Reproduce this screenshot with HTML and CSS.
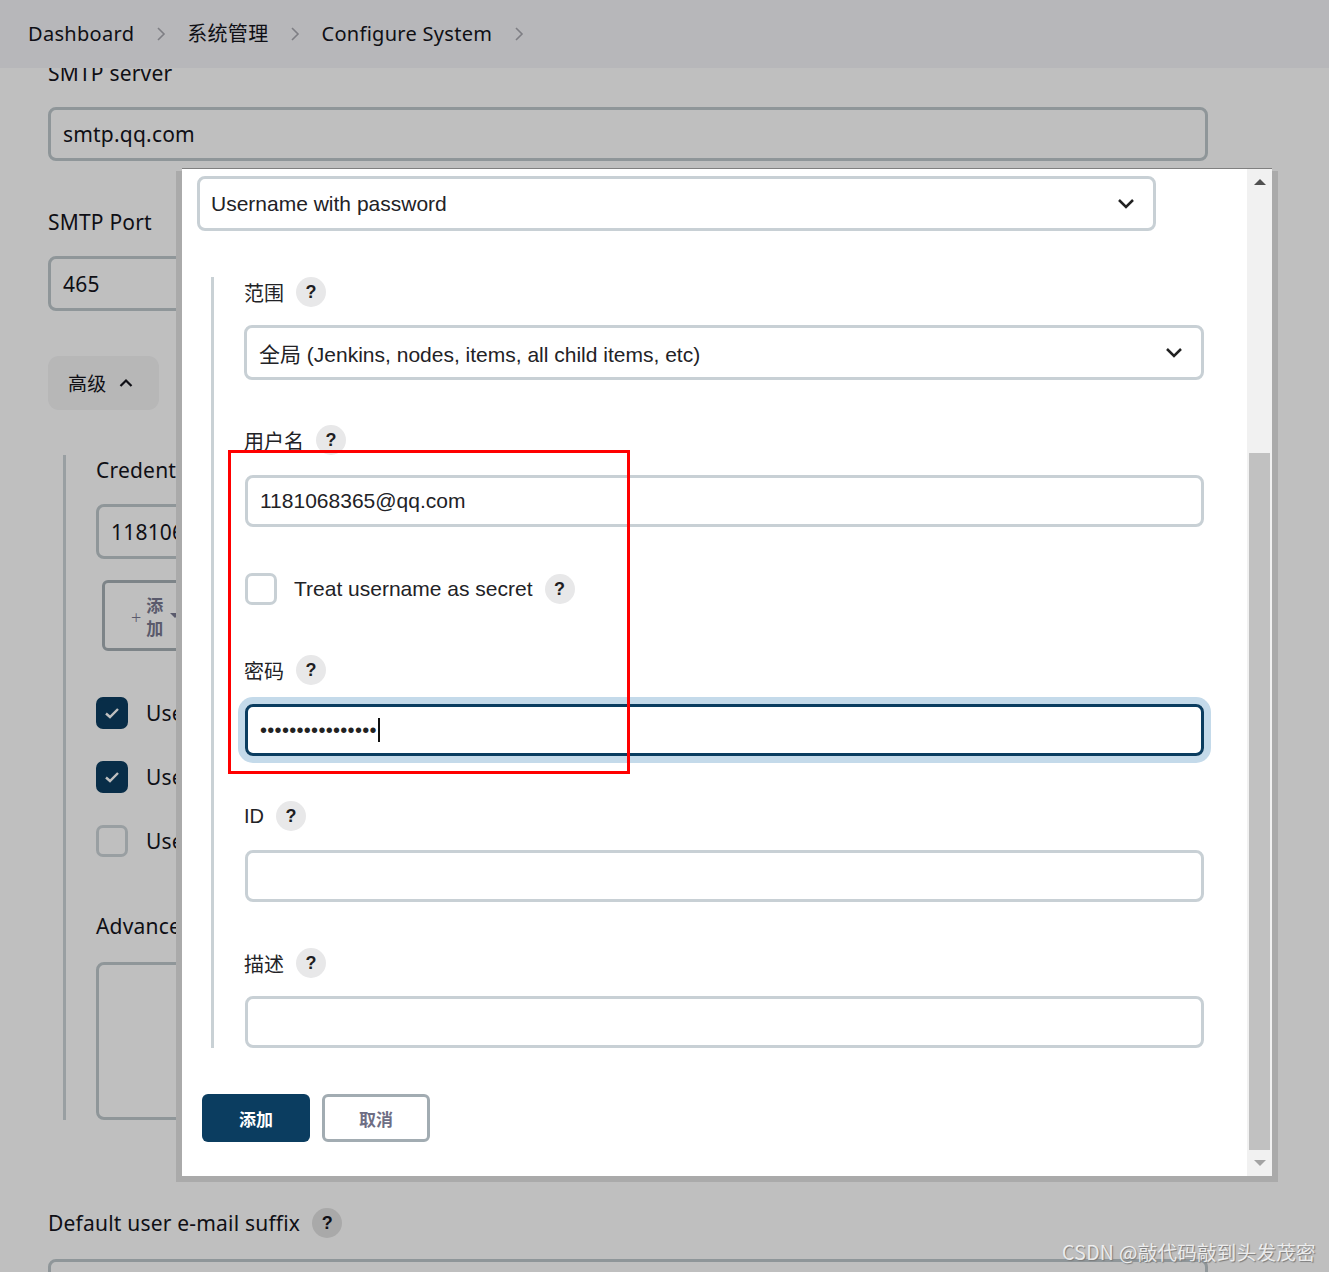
FILE: index.html
```html
<!DOCTYPE html>
<html lang="zh">
<head>
<meta charset="utf-8">
<title>Configure System</title>
<link rel="stylesheet" href="styles.css">
</head>
<body>
<header class="crumbs">
  <span class="crumb">Dashboard</span>
  <svg class="crumb-sep" width="10" height="16" viewBox="0 0 10 16"><polyline points="2,2 8,8 2,14" fill="none" stroke="currentColor" stroke-width="1.6"/></svg>
  <span class="crumb">系统管理</span>
  <svg class="crumb-sep" width="10" height="16" viewBox="0 0 10 16"><polyline points="2,2 8,8 2,14" fill="none" stroke="currentColor" stroke-width="1.6"/></svg>
  <span class="crumb">Configure System</span>
  <svg class="crumb-sep" width="10" height="16" viewBox="0 0 10 16"><polyline points="2,2 8,8 2,14" fill="none" stroke="currentColor" stroke-width="1.6"/></svg>
</header>

<main class="page">
  <div class="bg-label first">SMTP server</div>
  <div class="bg-input h54">smtp.qq.com</div>

  <div class="bg-label mt48">SMTP Port</div>
  <div class="bg-input h55 mt22">465</div>

  <div class="adv-btn">高级
    <svg width="14" height="10" viewBox="0 0 14 10"><polyline points="1.5,8 7,2.5 12.5,8" fill="none" stroke="currentColor" stroke-width="2.2"/></svg>
  </div>

  <section class="bg-section">
    <div class="bg-label sec-first">Credentials</div>
    <div class="bg-input h55 mt22">1181068365@qq.com/******</div>
    <div class="add-btn">
      <span class="plus">+</span>
      <span class="add-text">添<br>加</span>
      <span class="caret"></span>
    </div>
    <div class="bg-check mt46"><span class="cbox on"><svg width="18" height="14" viewBox="0 0 18 14"><polyline points="3,7.5 7,11 15,3" fill="none" stroke="#fff" stroke-width="2.4"/></svg></span>Use SSL</div>
    <div class="bg-check mt32"><span class="cbox on"><svg width="18" height="14" viewBox="0 0 18 14"><polyline points="3,7.5 7,11 15,3" fill="none" stroke="#fff" stroke-width="2.4"/></svg></span>Use TLS</div>
    <div class="bg-check mt32"><span class="cbox"></span>Use OAuth 2.0</div>
    <div class="bg-label mt56">Advanced Email Properties</div>
    <div class="bg-textarea"></div>
  </section>

  <div class="bg-label-row">Default user e-mail suffix <span class="bg-help">?</span></div>
  <div class="bg-input h55 mt20"></div>
</main>

<div class="overlay"></div>
<div class="modal-frame"></div>

<div class="modal">
  <div class="modal-body">
    <div class="select kind">
      <span>Username with password</span>
      <svg width="18" height="11" viewBox="0 0 18 11"><polyline points="2,2 9,9 16,2" fill="none" stroke="#222" stroke-width="2.5"/></svg>
    </div>

    <div class="m-section">
      <div class="m-label">范围 <span class="help">?</span></div>
      <div class="select scope">
        <span>全局 (Jenkins, nodes, items, all child items, etc)</span>
        <svg width="18" height="11" viewBox="0 0 18 11"><polyline points="2,2 9,9 16,2" fill="none" stroke="#222" stroke-width="2.5"/></svg>
      </div>

      <div class="m-label mt45">用户名 <span class="help">?</span></div>
      <div class="m-input mt20">1181068365@qq.com</div>

      <div class="m-check">
        <span class="m-cbox"></span>
        <span class="m-check-text">Treat username as secret</span>
        <span class="help">?</span>
      </div>

      <div class="m-label mt50">密码 <span class="help">?</span></div>
      <div class="m-input focused mt19"><span class="dots">••••••••••••••••</span><span class="text-caret"></span></div>

      <div class="m-label mt45">ID <span class="help">?</span></div>
      <div class="m-input mt19"></div>

      <div class="m-label mt46">描述 <span class="help">?</span></div>
      <div class="m-input mt18"></div>
    </div>

    <div class="m-actions">
      <button class="btn-primary">添加</button>
      <button class="btn-secondary">取消</button>
    </div>
  </div>
  <div class="scrollbar">
    <div class="sb-arrow"><span class="tri-up"></span></div>
    <div class="sb-thumb"></div>
    <div class="sb-arrow"><span class="tri-down"></span></div>
  </div>
</div>

<div class="annot"></div>
<div class="watermark">CSDN @敲代码敲到头发茂密</div>
</body>
</html>
```

FILE: styles.css
```css
* { box-sizing: border-box; }

html, body {
  margin: 0;
  padding: 0;
  height: 1272px;
  overflow: hidden;
  background: #ffffff;
}

body {
  font-family: "Noto Sans", "Noto Sans CJK SC", sans-serif;
  font-size: 21px;
  letter-spacing: 0.2px;
  color: #14141c;
  position: relative;
}

/* ---------- breadcrumb ---------- */
.crumbs {
  position: relative;
  z-index: 1;
  height: 68px;
  background: #f5f5f8;
  display: flex;
  align-items: center;
  padding-left: 28px;
  padding-bottom: 1px;
  font-size: 20px;
  letter-spacing: 0.3px;
}
.crumb { line-height: 26px; white-space: nowrap; }
.crumb-sep { color: #a8a8b0; margin: 0 21px 0 22px; }

/* ---------- background page ---------- */
.page {
  margin-top: -8px;
  padding: 0 121px 0 48px;
}

.bg-label { line-height: 26px; height: 26px; white-space: nowrap; }
.mt48 { margin-top: 48px; }
.mt22 { margin-top: 22px; }
.mt20 { margin-top: 20px; }
.mt46 { margin-top: 46px; }
.mt32 { margin-top: 32px; }
.mt56 { margin-top: 56px; }

.bg-input {
  margin-top: 21px;
  border: 3px solid #bfc9cd;
  border-radius: 8px;
  padding: 0 12px;
  display: flex;
  align-items: center;
  white-space: nowrap;
  overflow: hidden;
}
.h54 { height: 54px; }
.h55 { height: 55px; }

.adv-btn {
  margin-top: 45px;
  width: 111px;
  height: 54px;
  border-radius: 11px;
  background: #f4f4f5;
  display: flex;
  align-items: center;
  gap: 13px;
  padding-left: 20px;
  font-size: 19px;
}

.bg-section {
  margin-top: 45px;
  margin-left: 15px;
  border-left: 3px solid #cdd4d8;
  padding: 2px 0 0 30px;
  height: 665px;
}
.sec-first { margin-top: 0; }

.add-btn {
  margin-top: 21px;
  margin-left: 6px;
  width: 110px;
  height: 71px;
  border: 3px solid #a7b0b6;
  border-radius: 6px;
  display: flex;
  align-items: center;
  padding-left: 26px;
  color: #787890;
  letter-spacing: 0;
}
.plus { font-size: 18px; font-weight: 300; margin-right: 5px; margin-top: 2px; }
.add-text {
  font-size: 17px;
  font-weight: 700;
  line-height: 23px;
  font-family: "Noto Sans CJK SC", sans-serif;
}
.caret {
  margin-left: 7px;
  width: 0; height: 0;
  border-left: 5px solid transparent;
  border-right: 5px solid transparent;
  border-top: 5px solid #787890;
}

.bg-check {
  display: flex;
  align-items: center;
  height: 32px;
  gap: 18px;
  white-space: nowrap;
}
.bg-check.mt46 { margin-top: 46px; }
.cbox {
  width: 32px; height: 32px;
  border: 3px solid #cdd4d8;
  border-radius: 7px;
  display: flex; align-items: center; justify-content: center;
  flex: none;
}
.cbox.on { background: #0b3d60; border-color: #0b3d60; }

.bg-textarea {
  margin-top: 23px;
  height: 158px;
  border: 3px solid #bfc9cd;
  border-radius: 8px;
}

.bg-label-row {
  margin-top: 88px;
  height: 30px;
  display: flex;
  align-items: center;
  gap: 12px;
  white-space: nowrap;
}
.bg-help {
  width: 30px; height: 30px;
  border-radius: 50%;
  background: #e2e2e2;
  display: inline-flex; align-items: center; justify-content: center;
  font-family: "Liberation Sans", sans-serif;
  font-weight: 700;
  font-size: 18px;
  letter-spacing: 0;
}

/* ---------- overlay + modal ---------- */
.overlay {
  position: absolute;
  inset: 0;
  background: rgba(0, 0, 0, 0.25);
  z-index: 5;
}

.modal-frame {
  position: absolute;
  left: 176px; top: 171px;
  width: 1102px; height: 1011px;
  background: #aaaaaa;
  z-index: 6;
}

.modal {
  position: absolute;
  left: 182px; top: 168px;
  width: 1090px; height: 1008px;
  background: #ffffff;
  border-top: 1px solid #808080;
  z-index: 7;
  display: flex;
  overflow: hidden;
  font-family: "Liberation Sans", "Noto Sans CJK SC", sans-serif;
  font-size: 21px;
  letter-spacing: 0;
  color: #222226;
}

.modal-body {
  flex: 1;
  padding: 7px 0 0 15px;
}

.select {
  height: 55px;
  border: 3px solid #c8d0d5;
  border-radius: 8px;
  display: flex;
  align-items: center;
  justify-content: space-between;
  padding: 0 18px 0 11px;
  white-space: nowrap;
}
.select.kind { width: 959px; }
.select.scope { margin-top: 18px; padding-left: 12px; }

.m-section {
  margin-top: 46px;
  margin-left: 14px;
  width: 993px;
  border-left: 3px solid #c9d1d5;
  padding-left: 30px;
}

.m-label {
  height: 30px;
  display: flex;
  align-items: center;
  gap: 12px;
  white-space: nowrap;
  font-size: 20px;
}
.mt45 { margin-top: 45px; }
.mt50 { margin-top: 50px; }
.mt19 { margin-top: 19px; }
.mt18 { margin-top: 18px; }

.help {
  width: 30px; height: 30px;
  border-radius: 50%;
  background: #e8e8e9;
  display: inline-flex; align-items: center; justify-content: center;
  font-family: "Liberation Sans", sans-serif;
  font-weight: 700;
  font-size: 18px;
  color: #1e1e22;
  flex: none;
}

.m-input {
  margin-left: 1px;
  height: 52px;
  border: 3px solid #c8d0d5;
  border-radius: 8px;
  display: flex;
  align-items: center;
  padding-left: 12px;
  white-space: nowrap;
}
.m-input.focused {
  border-color: #0b3d60;
  box-shadow: 0 0 0 7px #c4daea;
}
.dots { font-size: 20px; letter-spacing: 0.3px; color: #222; }
.text-caret { width: 2px; height: 24px; background: #111; margin-left: 1px; }

.m-check {
  margin-top: 46px;
  margin-left: 1px;
  height: 32px;
  display: flex;
  align-items: center;
  white-space: nowrap;
}
.m-cbox {
  width: 32px; height: 32px;
  border: 3px solid #c8d0d5;
  border-radius: 7px;
  flex: none;
}
.m-check-text { margin-left: 17px; margin-right: 12px; }

.m-actions {
  margin-top: 46px;
  margin-left: 5px;
  display: flex;
  gap: 12px;
}
.btn-primary, .btn-secondary {
  width: 108px;
  height: 48px;
  border-radius: 6px;
  font-family: "Noto Sans CJK SC", sans-serif;
  font-weight: 700;
  font-size: 17px;
  padding: 0;
}
.btn-primary { background: #0b3d60; color: #ffffff; border: none; }
.btn-secondary { background: #ffffff; color: #6e6e84; border: 3px solid #a2acb2; }

.scrollbar {
  width: 25px;
  flex: none;
  background: #f1f1f1;
  display: flex;
  flex-direction: column;
}
.sb-arrow {
  height: 26px;
  display: flex;
  align-items: center;
  justify-content: center;
}
.tri-up {
  width: 0; height: 0;
  border-left: 6px solid transparent;
  border-right: 6px solid transparent;
  border-bottom: 6px solid #505050;
}
.tri-down {
  width: 0; height: 0;
  border-left: 6px solid transparent;
  border-right: 6px solid transparent;
  border-top: 6px solid #a3a3a3;
}
.sb-thumb {
  margin: 258px 2px 0 2px;
  height: 697px;
  background: #c1c1c1;
}

/* ---------- annotation ---------- */
.annot {
  position: absolute;
  left: 228px; top: 450px;
  width: 402px; height: 324px;
  border: 3px solid #ff0000;
  z-index: 8;
}

.watermark {
  position: absolute;
  left: 1062px; top: 1239px;
  z-index: 9;
  font-family: "Noto Sans CJK SC", sans-serif;
  font-size: 19.5px;
  letter-spacing: 0.3px;
  line-height: 26px;
  color: rgba(250, 250, 250, 0.85);
  text-shadow: 1px 1px 1px #7a7a7a;
  white-space: nowrap;
}
```
